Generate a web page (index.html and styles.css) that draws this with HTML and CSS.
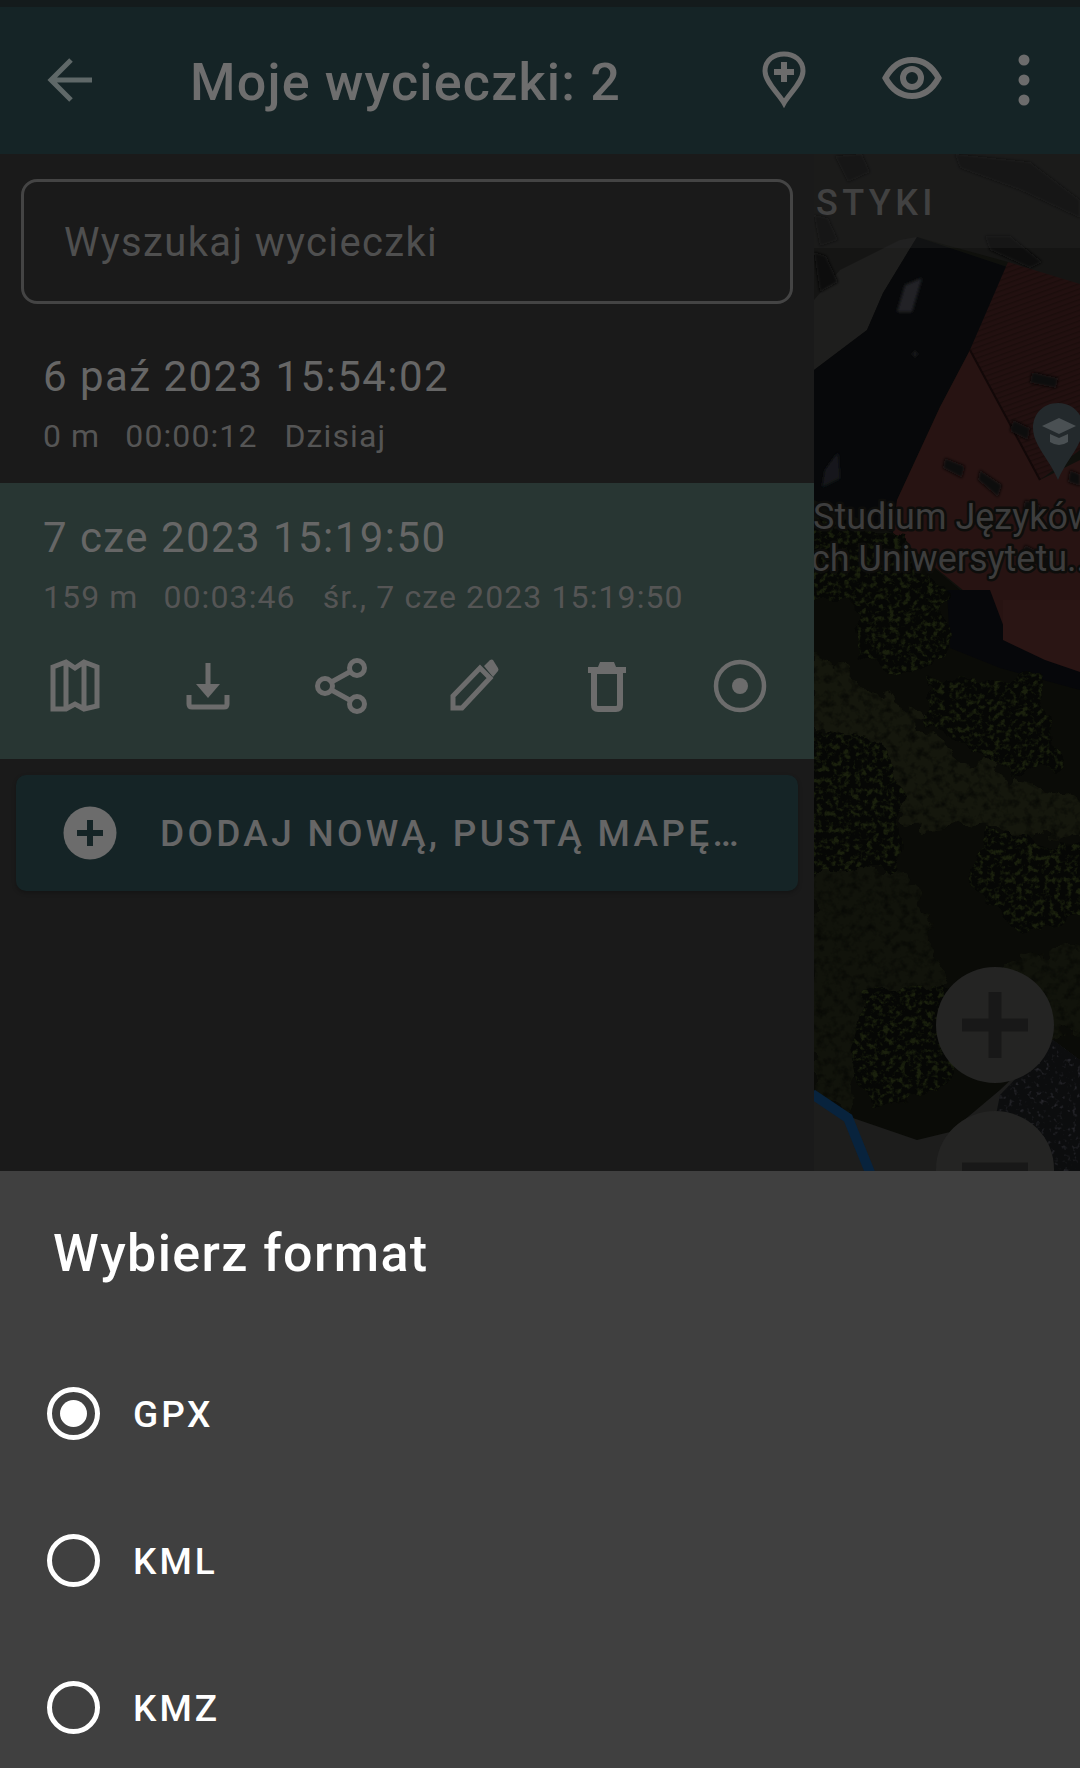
FILE: index.html
```html
<!DOCTYPE html>
<html lang="pl">
<head>
<meta charset="utf-8">
<title>Moje wycieczki</title>
<link rel="stylesheet" href="styles.css">
</head>
<body>
<div class="app">
  <div class="statusbar"></div>
  <header class="topbar">
    <svg class="ic back" viewBox="0 0 60 60"><path d="M51 30H11M30 10 10 30l20 20" /></svg>
    <h1 class="title">Moje wycieczki: 2</h1>
    <svg class="ic pin" viewBox="0 0 60 60"><path d="M30 53 C25 44 11 32 11 21 C11 10 20 4 30 4 C40 4 49 10 49 21 C49 32 35 44 30 53Z"/><path class="thick" d="M30 12v20M20 22h20"/></svg>
    <svg class="ic eye" viewBox="0 0 60 60"><path d="M3.500 30C10 18 19 12 30 12s20 6 26.500 18C50 42 41 48 30 48S10 42 3.500 30Z" stroke-width="6"/><circle cx="30" cy="30" r="9" stroke-width="6"/></svg>
    <svg class="ic dots" viewBox="0 0 60 60"><circle class="solid" cx="30" cy="10" r="5.5"/><circle class="solid" cx="30" cy="30" r="5.5"/><circle class="solid" cx="30" cy="50" r="5.5"/></svg>
  </header>
  <main class="content">
    <section class="panel">
      <div class="searchwrap"><div class="search"><span class="placeholder">Wyszukaj wycieczki</span></div></div>
      <article class="trip">
        <div class="trip-title">6 paź 2023 15:54:02</div>
        <div class="trip-meta"><span>0 m</span><span>00:00:12</span><span>Dzisiaj</span></div>
      </article>
      <article class="trip selected">
        <div class="trip-title">7 cze 2023 15:19:50</div>
        <div class="trip-meta"><span>159 m</span><span>00:03:46</span><span>śr., 7 cze 2023 15:19:50</span></div>
        <div class="actions">
          <svg class="ic act" viewBox="0 0 60 60"><path d="M8 11 21 6 30 12 39 6 52 11 V50 L39 53 30 48 21 53 8 53Z M21 7V52 M39 7V52" stroke-width="5"/></svg>
          <svg class="ic act" viewBox="0 0 60 60"><path d="M30 7V36" /><path class="solid" d="M18 28h24L30 42Z"/><path d="M11 39v9q0 3 3 3h32q3 0 3-3v-9" stroke-width="5"/></svg>
          <svg class="ic act" viewBox="0 0 60 60"><circle cx="46" cy="12" r="7.5"/><circle cx="14" cy="30" r="7.5"/><circle cx="46" cy="48" r="7.5"/><path d="M20.5 26 39.5 15.5M20.5 34l19 10.500"/></svg>
          <svg class="ic act" viewBox="0 0 60 60"><path d="M9 52V40L36 12l10 10-28 30Z" stroke-width="5"/><path class="solid" d="M40 10 46 4q2-1 3 0l5 8q1 2 0 3l-5 6Z"/></svg>
          <svg class="ic act" viewBox="0 0 60 60"><path d="M17 15H43V49q0 4-4 4H21q-4 0-4-4Z" stroke-width="6"/><path class="thick" d="M11 14H49"/><path class="solid" d="M23 6h14l2 5H21Z"/></svg>
          <svg class="ic act" viewBox="0 0 60 60"><circle cx="30" cy="30" r="24" stroke-width="4.500"/><circle class="solid" cx="30" cy="30" r="8"/></svg>
        </div>
      </article>
      <div class="addwrap">
        <button class="addbtn">
          <svg class="addicon" viewBox="0 0 54 54"><circle class="disc" cx="27" cy="27" r="26.500"/><path class="cross" d="M27 14V40M14 27H40"/></svg>
          <span class="addlabel">DODAJ NOWĄ, PUSTĄ MAPĘ…</span>
        </button>
      </div>
    </section>
    <section class="map">
      <svg class="mapart" viewBox="814 154 266 1017" preserveAspectRatio="none">
        <defs>
          <pattern id="tiles" width="5" height="5" patternUnits="userSpaceOnUse" patternTransform="rotate(70)">
            <rect width="5" height="5" fill="#221010"/><rect width="1.500" height="5" fill="#1b0d0c"/>
          </pattern>
          <filter id="grain" x="-10%" y="-10%" width="120%" height="120%" color-interpolation-filters="sRGB">
            <feTurbulence type="fractalNoise" baseFrequency="0.04" numOctaves="3" seed="5" result="n"/>
            <feDisplacementMap in="SourceGraphic" in2="n" scale="34" xChannelSelector="R" yChannelSelector="G" result="shape"/>
            <feTurbulence type="fractalNoise" baseFrequency="0.12" numOctaves="3" seed="7"/>
            <feColorMatrix values="0 0 0 0 0.03  0 0 0 0 0.035  0 0 0 0 0.02  2.400 0 0 0 -1.100"/>
            <feComposite in2="shape" operator="in" result="speck"/>
            <feMerge><feMergeNode in="shape"/><feMergeNode in="speck"/></feMerge>
          </filter>
          <filter id="canopy" x="-10%" y="-10%" width="120%" height="120%" color-interpolation-filters="sRGB">
            <feTurbulence type="fractalNoise" baseFrequency="0.035" numOctaves="3" seed="9" result="n"/>
            <feDisplacementMap in="SourceGraphic" in2="n" scale="30" xChannelSelector="R" yChannelSelector="G" result="shape"/>
            <feTurbulence type="fractalNoise" baseFrequency="0.18" numOctaves="3" seed="11"/>
            <feColorMatrix values="0 0 0 0 0.1  0 0 0 0 0.125  0 0 0 0 0.05  4 0 0 0 -1.900"/>
            <feComposite in2="shape" operator="in" result="speck"/>
            <feMerge><feMergeNode in="shape"/><feMergeNode in="speck"/></feMerge>
          </filter>
          <filter id="gravel" x="0" y="0" width="100%" height="100%" color-interpolation-filters="sRGB">
            <feTurbulence type="fractalNoise" baseFrequency="0.22" numOctaves="2" seed="3"/>
            <feColorMatrix values="0 0 0 0 0.15  0 0 0 0 0.15  0 0 0 0 0.17  4 0 0 0 -2.300"/>
            <feComposite in2="SourceGraphic" operator="in" result="speck"/>
            <feMerge><feMergeNode in="SourceGraphic"/><feMergeNode in="speck"/></feMerge>
          </filter>
          <filter id="soft"><feGaussianBlur stdDeviation="1.6"/></filter>
        </defs>
        <rect x="814" y="154" width="266" height="1017" fill="#0f100c"/>
        <polygon fill="#151514" points="814,154 1080,154 1080,300 1008,262 917,237 883,293 867,330 814,370"/>
        <polygon fill="#1e1e1d" points="840,270 900,240 917,237 883,293 867,330 814,370 814,300"/>
        <g fill="#0c0c0c" filter="url(#soft)">
          <polygon points="835,156 862,154 870,172 848,182"/>
          <polygon points="814,215 828,218 838,240 820,246"/>
          <polygon points="814,252 826,256 838,282 820,292"/>
          <polygon points="955,154 1030,162 1080,200 1080,218 1020,190 960,168"/>
          <polygon points="985,236 1010,236 1042,262 1030,268 990,250"/>
        </g>
        <polygon fill="#07080a" points="917,237 1007,267 970,350 940,407 897,500 893,533 814,500 814,370 867,330 883,293"/>
        <g filter="url(#soft)">
          <polygon fill="#202327" points="905,285 922,278 912,312 897,312"/>
          <polygon fill="#15181c" points="825,470 838,452 840,478 822,487"/>
          <circle cx="915" cy="354" r="2.500" fill="#15171a"/>
        </g>
        <polygon fill="url(#tiles)" points="1008,262 1080,284 1080,450 1040,480 970,350"/>
        <polygon fill="#271312" points="970,350 1040,480 1080,460 1080,680 1040,650 1000,630 975,600 893,533 897,500 940,407"/>
        <path d="M970 350 1040 480" stroke="#120808" stroke-width="2" fill="none"/>
        <g fill="#0c0a0a" filter="url(#soft)">
          <polygon points="1032,372 1058,378 1056,388 1030,383"/>
          <polygon points="1013,420 1030,428 1028,440 1010,431"/>
          <polygon points="945,458 965,466 962,478 943,468"/>
          <polygon points="980,470 1002,485 998,497 978,480"/>
          <polygon points="1070,470 1080,474 1080,486 1068,482"/>
          <polygon points="1025,500 1040,505 1038,515 1023,510"/>
          <polygon points="1025,545 1055,560 1052,572 1022,555"/>
        </g>
        <polygon fill="#0a0b07" points="814,533 893,533 960,590 990,640 1080,688 1080,1171 814,1171"/>
        <polygon fill="#06070a" points="947,590 990,590 1005,630 1080,660 1080,690 1000,668 950,648"/>
        <polygon fill="#2a1514" points="1003,600 1080,600 1080,672 1045,660 1003,640"/>
        <polygon fill="#15170d" filter="url(#grain)" points="810,650 900,705 967,762 1090,800 1090,840 950,825 903,829 880,750 810,732"/>
        <polygon fill="#11130b" filter="url(#grain)" points="810,870 900,870 925,915 950,985 920,1000 870,1040 850,1117 810,1090"/>
        <polygon fill="#11130b" filter="url(#grain)" points="1000,960 1090,945 1090,1030 1040,1040 1000,1010"/>
        <polygon fill="#060705" filter="url(#canopy)" points="850,585 945,585 950,655 900,675 860,660"/>
        <polygon fill="#060705" filter="url(#canopy)" points="930,680 1040,675 1060,775 980,760 930,725"/>
        <polygon fill="#060705" filter="url(#canopy)" points="805,730 880,740 905,800 900,870 805,870"/>
        <polygon fill="#060705" filter="url(#canopy)" points="985,830 1090,845 1090,915 1020,925 970,885"/>
        <polygon fill="#060705" filter="url(#canopy)" points="865,995 950,980 975,1050 930,1100 865,1110 850,1050"/>
        <polygon fill="#060705" filter="url(#canopy)" points="814,520 905,535 935,600 814,600"/>
        <polygon fill="#1d1d1c" points="814,1094 850,1117 917,1140 950,1132 1000,1090 1053,1040 1080,1060 1080,1171 814,1171"/>
        <polygon fill="#0c0d0e" filter="url(#gravel)" points="1000,1095 1053,1040 1080,1060 1080,1171 985,1171"/>
        <polyline fill="none" stroke="#08233d" stroke-width="10" points="812,1094 848,1118 871,1175"/>
        <g class="pinmark">
          <path fill="#23292c" d="M1058 403c-15 0-25 11-25 25 0 17 17 32 25 52 8-20 25-35 25-52 0-14-10-25-25-25Z"/>
          <path fill="#4a5053" d="M1059 418l-17 8 17 8 17-8ZM1050 434v8q9 6 18 0v-8l-9 4Z"/>
        </g>
        <text class="maplabel" x="813" y="529">Studium Języków</text>
        <text class="maplabel" x="811" y="571">ch Uniwersytetu..</text>
      </svg>
      <div class="tabstrip"><span class="tabtext">STYKI</span></div>
      <div class="zoomctl">
        <div class="zoombtn"><svg class="zoomicon" viewBox="0 0 66 66"><path d="M0 33H66M33 0V66" /></svg></div>
        <div class="zoombtn"><svg class="zoomicon" viewBox="0 0 66 66"><path d="M0 33H66"/></svg></div>
      </div>
    </section>
  </main>
  <section class="sheet">
    <h2 class="sheet-title">Wybierz format</h2>
    <ul class="options">
      <li class="option"><span class="radio on"></span><span class="optlabel">GPX</span></li>
      <li class="option"><span class="radio"></span><span class="optlabel">KML</span></li>
      <li class="option"><span class="radio"></span><span class="optlabel">KMZ</span></li>
    </ul>
  </section>
</div>
</body>
</html>
```
FILE: styles.css
```css
* { box-sizing: border-box; }
html, body { margin: 0; padding: 0; background: #1a1a1a; }
body { font-family: Roboto, "Noto Sans", sans-serif; }
.app { width: 1080px; height: 1768px; display: flex; flex-direction: column; overflow: hidden; }
.statusbar { height: 7px; background: #141b1c; flex: none; }
.topbar { height: 147px; flex: none; background: #152426; display: flex; align-items: center; padding: 0 0 0 41px; }
.ic { fill: none; stroke: #6c6c6c; stroke-width: 5; flex: none; }
.ic .solid { fill: #6c6c6c; stroke: none; }
.ic .thick { stroke-width: 6; }
.back { width: 60px; height: 60px; margin-top: -1px; stroke: #5f6868; stroke-width: 5; }
.title { margin: 4px 0 0 89px; width: 564px; font-size: 52px; line-height: 60px; font-weight: 500; color: #6e6e6e; letter-spacing: 1.2px; }
.pin { width: 60px; height: 60px; margin-top: -2px; }
.eye { width: 60px; height: 60px; margin-left: 68px; margin-top: -6px; }
.dots { width: 60px; height: 60px; margin-left: 52px; margin-top: -1px; }
.content { flex: 1; min-height: 0; display: flex; }
.panel { width: 814px; flex: none; background: #1a1a1a; display: flex; flex-direction: column; }
.searchwrap { padding: 25px 21px 27px; }
.search { height: 125px; width: 772px; border: 3px solid #444; border-radius: 16px; display: flex; align-items: center; padding-left: 40px; font-size: 40px; color: #4f4f4f; letter-spacing: 1.35px; }
.placeholder { margin-top: 1px; }
.trip { padding: 22px 43px 27px; color: #666; }
.trip-title { font-size: 42px; line-height: 48px; letter-spacing: 1.45px; color: #666; }
.trip-meta { margin-top: 15px; font-size: 32px; line-height: 40px; letter-spacing: 1.1px; color: #555; display: flex; gap: 27px; }
.trip-meta span:first-child { margin-right: -2px; }
.selected { background: #283633; padding: 31px 0 0; height: 276px; }
.selected .trip-title, .selected .trip-meta { padding-left: 43px; }
.actions { display: grid; grid-template-columns: repeat(6, 133px); justify-items: center; padding: 0 8px; margin-top: 39px; }
.act { width: 60px; height: 60px; }
.addwrap { padding: 16px 16px 0 16px; }
.addbtn { width: 782px; height: 116px; border: 0; border-radius: 10px; background: #152426; display: flex; align-items: center; padding: 0 0 0 47px; box-shadow: 0 2px 4px rgba(0,0,0,.25); font-family: inherit; }
.addicon { width: 54px; height: 54px; flex: none; }
.disc { fill: #6c6c6c; }
.cross { stroke: #152426; stroke-width: 6; fill: none; }
.addlabel { margin-left: 43px; font-size: 37px; font-weight: 500; letter-spacing: 3.3px; color: #666; white-space: nowrap; }
.map { flex: 1; position: relative; overflow: hidden; background: #131311; }
.mapart { position: absolute; inset: 0; width: 100%; height: 100%; display: block; }
.maplabel { font-family: Roboto, sans-serif; font-size: 36px; fill: #3d3d3d; stroke: #0d0d0b; stroke-width: 5px; paint-order: stroke; stroke-linejoin: round; }
.tabstrip { position: absolute; left: 0; right: 0; top: 0; height: 94px; background: rgba(42,42,42,.3); display: flex; align-items: center; padding-left: 2px; }
.tabtext { font-size: 36px; font-weight: 500; letter-spacing: 4.4px; color: #414141; margin-top: 4px; }
.zoomctl { position: absolute; left: 122px; top: 813px; display: flex; flex-direction: column; gap: 28px; }
.zoombtn { width: 118px; height: 116px; border-radius: 50%; background: #242423; display: flex; align-items: center; justify-content: center; }
.zoomicon { width: 66px; height: 66px; stroke: #181818; stroke-width: 13; fill: none; }
.sheet { height: 597px; flex: none; background: #404040; overflow: hidden; }
.sheet-title { margin: 0; padding: 51px 0 0 53px; font-size: 52px; line-height: 64px; font-weight: 500; letter-spacing: 1.4px; color: #fff; }
.options { list-style: none; margin: 54px 0 0; padding: 0; }
.option { height: 147px; display: flex; align-items: center; padding-left: 47px; }
.radio { width: 53px; height: 53px; border-radius: 50%; border: 5px solid #fff; flex: none; display: flex; align-items: center; justify-content: center; }
.radio.on::after { content: ""; width: 27px; height: 27px; border-radius: 50%; background: #fff; }
.optlabel { margin-left: 33px; font-size: 37px; font-weight: 500; letter-spacing: 3px; color: #fff; margin-top: 2px; }
```
